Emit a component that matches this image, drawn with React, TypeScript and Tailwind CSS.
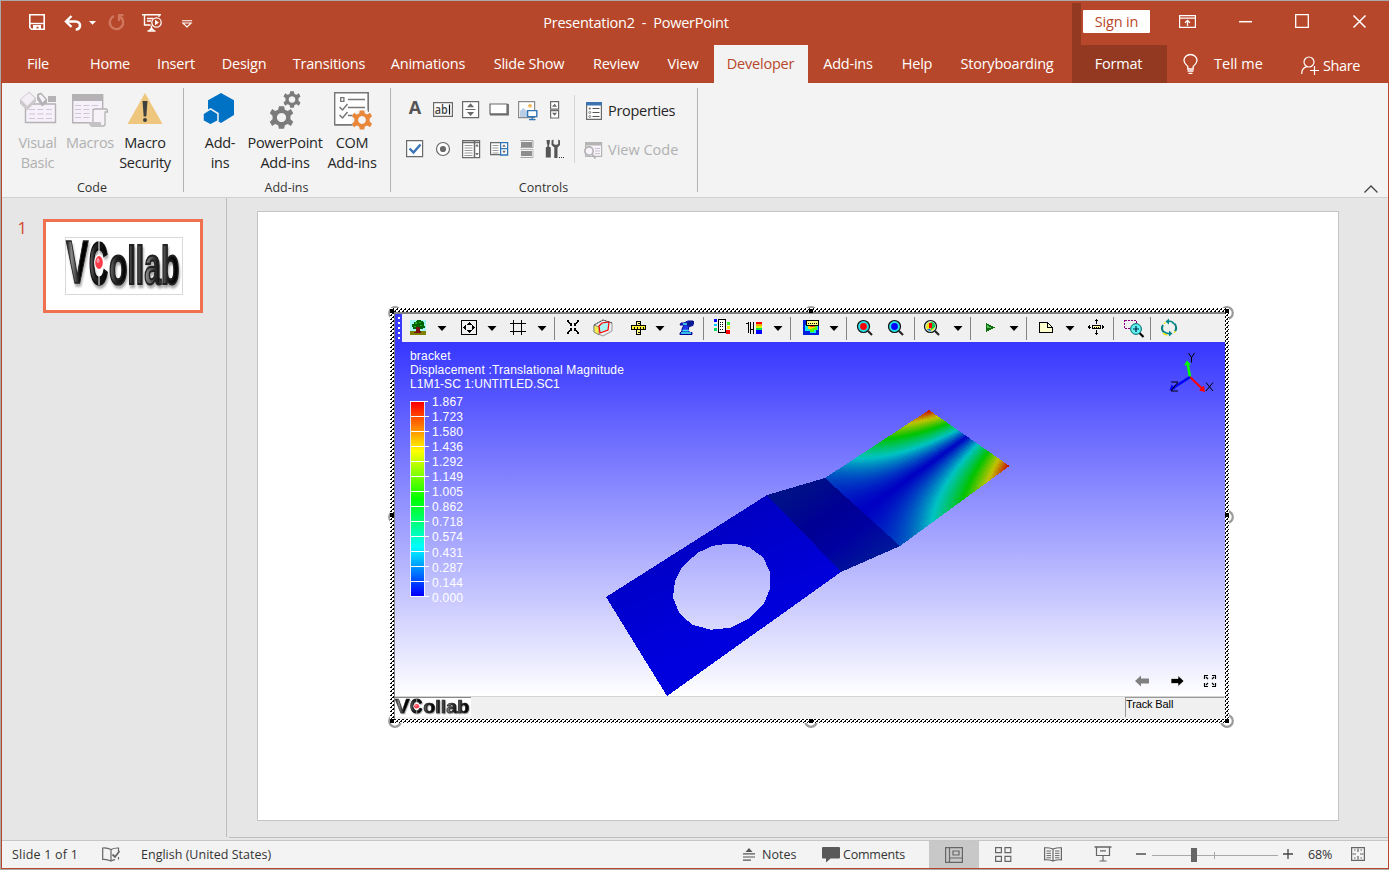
import React from "react";

type P = { children?: React.ReactNode; className?: string };

const Svg = ({ w, h, children, className = "" }: P & { w: number; h: number }) => (
  <svg width={w} height={h} viewBox={`0 0 ${w} ${h}`} fill="none" className={`block shrink-0 overflow-visible ${className}`}>
    {children}
  </svg>
);

/* ---------- Title bar ---------- */

const TitleBar = () => (
  <div className="flex h-[44px] shrink-0 items-start bg-[#b7472a] text-white">
    <Svg w={16} h={16} className="mt-[13px] ml-[28px]">
      <path d="M.8.8h14.4v14.4H2.500L.8 13.500z" stroke="#fff" strokeWidth="1.600" />
      <path d="M1 8.800h14v1.400H1z" fill="#fff" />
      <path d="M4 15.500V11h8v4.500H9.500V12.800H7.500V15.500z" fill="#fff" />
    </Svg>
    <Svg w={18} h={16} className="mt-[14px] ml-[19px]">
      <path d="M2 6.500h9.500c6 0 6 8 .2 8" stroke="#fff" strokeWidth="2.600" />
      <path d="M7.500 1L2 6.500l5.500 5.500" stroke="#fff" strokeWidth="2.400" />
    </Svg>
    <Svg w={7} h={4} className="mt-[20px] ml-[7px]"><path d="M0 0h7L3.500 3.800z" fill="#fff" /></Svg>
    <Svg w={17} h={17} className="mt-[13px] ml-[12px]">
      <path d="M6 2.200A6.700 6.700 0 1 0 11.800 2.600" stroke="#d0765f" strokeWidth="2.400" />
      <path d="M10 1.200h5.500M11 0v7" stroke="#d0765f" strokeWidth="2.200" />
    </Svg>
    <Svg w={20} h={18} className="mt-[13px] ml-[17px]">
      <path d="M0 .8h19M2.500 1v10h6M5 4.500h6M5 7h4M9.500 11.500v3M5.500 17h8M7 17l2.500-3 2.500 3" stroke="#fff" strokeWidth="1.400" />
      <circle cx="14.500" cy="8.500" r="4.700" stroke="#fff" strokeWidth="1.200" />
      <path d="M13 5.800v5.400l4-2.700z" fill="#fff" />
      <path d="M17 1v2" stroke="#fff" strokeWidth="1.300" />
    </Svg>
    <Svg w={10} h={8} className="mt-[19px] ml-[20px]"><path d="M0 .7h10M.8 3l4.200 4 4.200-4z" stroke="#fff" strokeWidth="1.100" /></Svg>
    <div className="mt-[12px] ml-[304px] w-[280px] whitespace-pre text-center text-[14.5px] leading-[20px] tracking-[-0.25px]">Presentation2  -  PowerPoint</div>
    <div className="ml-[296px] h-[42px] w-[9px] mt-[2px] bg-[#933922]" />
    <div className="mt-[9px] ml-[2px] h-[23px] w-[67px] rounded-[1px] bg-white text-center text-[14.5px] leading-[24px] tracking-[-0.15px] text-[#b7472a]">Sign in</div>
    <Svg w={17} h={13} className="mt-[14px] ml-[29px]">
      <path d="M.6.6h15.800v11.800H.6zM.6 3.200h15.800" stroke="#fff" strokeWidth="1.200" />
      <path d="M8.500 11V5.500M6 7.800l2.500-2.500L11 7.800" stroke="#fff" strokeWidth="1.300" />
    </Svg>
    <Svg w={13} h={14} className="mt-[13px] ml-[43px]"><path d="M0 7.700h13" stroke="#fff" strokeWidth="1.500" /></Svg>
    <Svg w={14} h={14} className="mt-[13px] ml-[43px]"><path d="M.7.7h12.600v12.600H.7z" stroke="#fff" strokeWidth="1.300" /></Svg>
    <Svg w={13} h={13} className="mt-[14px] ml-[44px]"><path d="M.5.5l12 12M12.500.5l-12 12" stroke="#fff" strokeWidth="1.500" /></Svg>
  </div>
);

const tabs: [string, string][] = [
  ["File", "w-[73px] pl-[1px]"], ["Home", "w-[72px]"], ["Insert", "w-[60px]"], ["Design", "w-[76px]"],
  ["Transitions", "w-[94px]"], ["Animations", "w-[104px]"], ["Slide Show", "w-[98px]"], ["Review", "w-[76px]"],
  ["View", "w-[60px] pr-[2px]"], ["Developer", "w-[94px] bg-[#f3f3f3] pr-[1px] text-[#b7472a]"], ["Add-ins", "w-[80px]"],
  ["Help", "w-[58px]"], ["Storyboarding", "w-[126px] pr-[4px]"], ["Format", "w-[95px] bg-[#933922] pr-[2px]"],
];

const Tabs = () => (
  <div className="flex h-[38px] shrink-0 bg-[#b7472a] text-[14.5px] leading-[37px] tracking-[-0.22px] text-white">
    {tabs.map(([t, c]) => (
      <div key={t} className={`shrink-0 whitespace-nowrap text-center ${c}`}>{t}</div>
    ))}
    <Svg w={15} h={20} className="mt-[9px] ml-[16px]">
      <path d="M4.800 15v-2.500C3 10.500 1 9 1 6.500a6.300 5.800 0 0 1 13 0c0 2.500-2 4-3.800 6V15z" stroke="#fff" strokeWidth="1.300" />
      <path d="M4.500 17h6M5.500 19.300h4" stroke="#fff" strokeWidth="1.300" />
    </Svg>
    <div className="ml-[16px] w-[51px] whitespace-nowrap tracking-[0px]">Tell me</div>
    <Svg w={18} h={19} className="mt-[11px] ml-[36px]">
      <circle cx="8" cy="6" r="5" stroke="#fff" strokeWidth="1.200" />
      <path d="M.7 18c0-4 2-6.500 5-7.300M13.500 10v9M9 14.500h9" stroke="#fff" strokeWidth="1.200" />
    </Svg>
    <div className="mt-[2px] ml-[4px] tracking-[-0.4px]">Share</div>
  </div>
);

/* ---------- Ribbon ---------- */

const VisualBasicIcon = () => (
  <Svg w={38} h={36}>
    <path d="M6.500 13h30v18.500h-30z" fill="#f6f0fa" stroke="#b4b2b4" strokeWidth="1.400" />
    <path d="M29 5h8v6h-8z" fill="#b4b2b4" />
    <path d="M10 18.500h24M10 23h24M10 27.500h24" stroke="#cfc6d4" strokeDasharray="6 2.500" />
    <path d="M1 8.500L10 .5l7 6.500v3.500L8 19.500l-7-7z" fill="#cbc9cb" />
    <path d="M2 8.500l8-7 6 6-8 7.500z" fill="#f3eef5" />
    <path d="M18 3l4-1.500L28 8v4l-5 3.500-5-7z" fill="#b4b2b4" />
    <path d="M19.500 4.500l2.500-1 4.500 5-3 3z" fill="#f6f0fa" />
  </Svg>
);
const MacrosIcon = () => (
  <Svg w={38} h={36}>
    <path d="M1.700 3.700h30v28h-30z" fill="#f6f0fa" stroke="#b4b2b4" strokeWidth="1.400" />
    <path d="M1 3h31v7H1z" fill="#b4b2b4" />
    <path d="M4 14.500h24M4 18.500h24M4 22.500h17M4 26.500h17" stroke="#cfc6d4" strokeDasharray="6 2.500" />
    <path d="M22 32V20q0-2 2-2h11q1.500 0 1.500 3H34v12q0 2-2 2H21z" fill="#f6f2f8" stroke="#b4b2b4" strokeWidth="1.300" />
    <path d="M18 31h12v4.500H20q-2-.5-2-4.500z" fill="#c4c2c4" />
  </Svg>
);
const WarningIcon = () => (
  <Svg w={36} h={36}>
    <path d="M18 2l17.500 31H.5z" fill="#eec67d" />
    <path d="M15.500 10h5l-1.200 15.500h-2.600z" fill="#404040" />
    <circle cx="18" cy="29" r="2" fill="#404040" />
  </Svg>
);
const HexIcon = () => (
  <Svg w={32} h={36} className="-ml-[2px]">
    <path d="M5 9.200L18 2l13 7.200V24l-13 8L5 24z" fill="#0072c6" />
    <path d="M0 22.500l7.500-4.700 7.500 4.700v7.300L7.500 34 0 29.800z" fill="#0072c6" stroke="#f3f3f3" strokeWidth="1.500" />
  </Svg>
);
const Gear = ({ x, y, s, c }: { x: number; y: number; s: number; c: string }) => (
  <g transform={`translate(${x} ${y}) scale(${s})`}>
    <path
      d="M-2.500-11h5l.8 3.400 2.900 1.300L9.200-8.400l2.300 4.200L8.800-1.700v3.400l2.700 2.500-2.300 4.200-3-2.100-2.900 1.300L2.500 11h-5l-.8-3.400-2.900-1.300-3 2.100-2.300-4.200L-8.800 1.700v-3.400l-2.700-2.500 2.300-4.200 3 2.100 2.900-1.300zM0-4.500a4.500 4.500 0 1 0 .01 0z"
      fill={c}
      fillRule="evenodd"
    />
  </g>
);
const GearsIcon = () => (
  <Svg w={32} h={38}>
    <Gear x={12.500} y={26.500} s={1.020} c="#7b7b7b" />
    <Gear x={23} y={8.500} s={0.740} c="#7b7b7b" />
  </Svg>
);
const ComIcon = () => (
  <Svg w={38} h={38}>
    <path d="M1.700 1.700h33.600v32H1.700z" fill="#fff" stroke="#777" strokeWidth="1.400" />
    <path d="M7.700 6.700h3.200v3.600H7.700zM15 8.500h17M15 16.500h17M15 24.500h8" stroke="#777" strokeWidth="1.300" />
    <path d="M6.500 16l3 3 5-6M6.500 24l3 3 5-6" stroke="#777" strokeWidth="1.500" />
    <circle cx="29" cy="29" r="10.500" fill="#f3f3f3" />
    <path d="M1.700 33.700h17M35.300 1.700v17" stroke="#777" strokeWidth="1.400" />
    <Gear x={29} y={29} s={0.870} c="#e8873a" />
  </Svg>
);

const Big = ({ icon, a, b, dim, className = "" }: { icon: React.ReactNode; a: string; b?: string; dim?: boolean; className?: string }) => (
  <div className={`flex shrink-0 flex-col items-center whitespace-nowrap text-center text-[14.500px] leading-[20px] tracking-[-0.28px] ${dim ? "text-[#b1b1b1]" : "text-[#262626]"} ${className}`}>
    <div className="flex h-[42px] items-start">{icon}</div>
    <div>{a}</div>
    <div>{b}</div>
  </div>
);
const Group = ({ label, children, className = "" }: P & { label: string }) => (
  <div className={`flex shrink-0 flex-col ${className}`}>
    <div className="flex h-[95px] shrink-0 pt-[8px]">{children}</div>
    <div className="pr-[1px] text-center text-[12.500px] leading-[20px] tracking-[0px] text-[#333]">{label}</div>
  </div>
);
const Sep = () => <div className="mt-[5px] h-[104px] w-px shrink-0 bg-[#b4b4b4]" />;

const K = "#6a6a6a";
const smallIcons: React.ReactNode[] = [
  <text x="10" y="14" textAnchor="middle" fontFamily="Open Sans" fontWeight="700" fontSize="18" fill="#555">A</text>,
  <g><path d="M.6 2.600h18.800v13.800H.6z" fill="#fff" stroke={K} strokeWidth="1.200" /><text x="1.800" y="13.500" fontFamily="Open Sans" fontSize="12" fontWeight="600" fill="#444" textLength="13" lengthAdjust="spacingAndGlyphs">ab</text><path d="M16.500 4.500v10" stroke="#111" strokeWidth="1.200" /></g>,
  <g><path d="M1.600 1.600h16v16h-16z" fill="#fff" stroke={K} strokeWidth="1.200" /><path d="M4.500 9.500h10" stroke={K} /><path d="M9.600 3.200l3.500 4H6zM9.600 16l3.500-4H6z" fill={K} /></g>,
  <g><path d="M1 4h17v10H1z" fill="#fff" stroke={K} strokeWidth="1.200" /><path d="M1 14.500h18V4" stroke={K} strokeWidth="1.800" /></g>,
  <g><path d="M1.600 1.600h16v16h-16z" fill="#fff" stroke="#8a8a8a" strokeWidth="1.200" /><circle cx="13" cy="5.800" r="1.900" fill="#eeb95c" /><path d="M3 11l3.500-3 4 4v5H3z" fill="#b9cde6" /><path d="M10.600 10.600h9.200v6h-9.200z" fill="#fff" stroke="#2e75b6" strokeWidth="1.400" /><path d="M15.200 17v2.500M12 19.600h6.500" stroke="#2e75b6" strokeWidth="1.400" /></g>,
  <g><path d="M5.600 1.600h8v7.500h-8zM5.600 10.600h8V18h-8z" fill="#fff" stroke={K} strokeWidth="1.200" /><path d="M9.600 3.800l2.500 3H7zM9.600 15.800l2.500-3H7z" fill={K} /></g>,
  <g><path d="M1.600 1.600h16v16h-16z" fill="#fff" stroke={K} strokeWidth="1.200" /><path d="M4.500 9.500l4 4 7-8" stroke="#3a74b4" strokeWidth="2.400" /></g>,
  <g><circle cx="10" cy="10" r="6.500" fill="#fff" stroke={K} strokeWidth="1.200" /><circle cx="10" cy="10" r="3.100" fill={K} /></g>,
  <g><path d="M1.600 1.600h17v17h-17z" fill="#fff" stroke={K} strokeWidth="1.200" /><path d="M1.600 3.500h17M13.500 2v17" stroke={K} strokeWidth="1.500" /><path d="M3.500 6.500h8M3.500 9h8M3.500 11.500h8M3.500 14h8M3.500 16.500h8" stroke="#999" /><path d="M16 5l1.800 2.500h-3.600zM16 16.500l1.800-2.500h-3.600z" fill={K} /></g>,
  <g><path d="M1.600 3.600h10v12h-10z" fill="#fff" stroke={K} strokeWidth="1.200" /><path d="M3.500 6.500h6M3.500 9h6M3.500 11.500h6M3.500 14h6" stroke="#999" /><path d="M11.600 3.600h7v12.400h-7zM11.600 9.700h7" fill="#fff" stroke="#2e75b6" strokeWidth="1.300" /><path d="M15 5.200l1.800 2.500h-3.600zM15 14.300l1.800-2.500h-3.600z" fill={K} /></g>,
  <g><path d="M3.500 1.500h12.500v7M3.500 8.500H16M3.500 18.500H16" stroke="#a5a5a5" /><path d="M4 3h11v5H4zM4 12h11v5H4z" fill="#8e8e8e" /><path d="M3.500 10.500h12.500v8" stroke="#bbb" /></g>,
  <g><path d="M1.500 1h3.500l-.5 4.500h-2.500zM.8 8.500q2.500-2 5 0v10h-5z" fill="#555" /><path d="M3.200 5v6" stroke="#555" strokeWidth="1.600" /><path d="M6.500 1.500v4.500l2.800 2.500v10.500h3.200V8.500L15 6V1.500l-1.800-1V5l-1.500.8h-1.500L8.500 5V.5z" fill="#555" /><path d="M14 18h1v1h-1zM16 18h1v1h-1zM18 18h1v1h-1z" fill="#333" /></g>,
];

const PropIcon = ({ dim }: { dim?: boolean }) =>
  dim ? (
    <Svg w={18} h={18} className="-ml-px">
      <path d="M1.600 1.600h16v13.800h-16z" fill="#f8f3fa" stroke="#b4b4b4" strokeWidth="1.200" />
      <path d="M1 1h17v3.500H1z" fill="#b4b4b4" /><path d="M11 7.500h5M11 10h5M11 12.500h5" stroke="#c8c0cc" />
      <circle cx="5" cy="10" r="4.200" fill="#f8f3fa" stroke="#b4b4b4" strokeWidth="1.700" /><path d="M8 13l3.500 4.500" stroke="#b4b4b4" strokeWidth="2" />
    </Svg>
  ) : (
    <Svg w={18} h={18}>
      <path d="M1.600 1.600h14.800v15.800H1.600z" fill="#fff" stroke={K} strokeWidth="1.200" />
      <path d="M1 0h16v3.500H1z" fill="#3c74b2" /><path d="M7.500 6.500h7M7.500 10.500h7M7.500 14.500h7" stroke="#555" />
      <circle cx="4.800" cy="6.500" r="1.100" fill={K} /><circle cx="4.800" cy="10.500" r="1" stroke={K} strokeWidth=".8" /><circle cx="4.800" cy="14.500" r="1" stroke={K} strokeWidth=".8" />
    </Svg>
  );

const Ribbon = () => (
  <div className="flex h-[115px] shrink-0 border-b border-[#d0d0d0] bg-[#f3f3f3]">
    <Group label="Code" className="w-[181px]">
      <Big className="ml-[9px] w-[53px]" dim icon={<VisualBasicIcon />} a="Visual" b="Basic" />
      <Big className="w-[52px]" dim icon={<MacrosIcon />} a="Macros" />
      <Big className="w-[58px]" icon={<WarningIcon />} a="Macro" b="Security" />
    </Group>
    <Sep />
    <Group label="Add-ins" className="w-[206px]">
      <Big className="ml-[11px] w-[50px]" icon={<HexIcon />} a="Add-" b="ins" />
      <Big className="w-[80px]" icon={<GearsIcon />} a="PowerPoint" b="Add-ins" />
      <Big className="w-[54px]" icon={<ComIcon />} a="COM" b="Add-ins" />
    </Group>
    <Sep />
    <Group label="Controls" className="w-[306px]">
      <div className="ml-[14px] grid h-[78px] grid-cols-[repeat(6,28px)] grid-rows-[39px_39px] pt-[9px]">
        {smallIcons.map((ic, i) => <Svg key={i} w={20} h={20}>{ic}</Svg>)}
      </div>
      <div className="mt-[4px] ml-px h-[68px] w-px bg-[#d4d4d4]" />
      <div className="ml-[10px] flex flex-col gap-[19px] pt-[10px] text-[14.500px] leading-[20px] tracking-[-0.300px] text-[#262626]">
        <div className="flex items-center gap-[5px]"><PropIcon />Properties</div>
        <div className="flex items-center gap-[6px] tracking-[0px] text-[#b1b1b1]"><PropIcon dim />View Code</div>
      </div>
    </Group>
    <Sep />
    <Svg w={14} h={8} className="mt-[102px] ml-[666px]"><path d="M.5 7.500l6.500-6.500 6.500 6.500" stroke="#444" strokeWidth="1.300" /></Svg>
  </div>
);

/* ---------- VCollab logo ---------- */

const Logo = ({ w, h, id }: { w: number; h: number; id: string }) => (
  <svg width={w} height={h} viewBox="0 0 116 56" preserveAspectRatio="none" className="block shrink-0 overflow-visible">
    <defs>
      <linearGradient id={`${id}v`} x1="0" x2="1">
        <stop offset="0" stopColor="#111" /><stop offset=".25" stopColor="#8a8a8a" /><stop offset=".5" stopColor="#333" /><stop offset=".65" stopColor="#000" />
      </linearGradient>
      <linearGradient id={`${id}c`} x1="0" x2="1">
        <stop offset="0" stopColor="#777" /><stop offset=".3" stopColor="#222" /><stop offset="1" stopColor="#000" />
      </linearGradient>
      <linearGradient id={id} x1="0" x2="1">
        <stop offset="0" stopColor="#777" /><stop offset=".1" stopColor="#222" /><stop offset=".24" stopColor="#000" />
        <stop offset=".27" stopColor="#888" /><stop offset=".34" stopColor="#111" /><stop offset=".38" stopColor="#888" />
        <stop offset=".46" stopColor="#222" /><stop offset=".5" stopColor="#999" /><stop offset=".7" stopColor="#111" />
        <stop offset=".75" stopColor="#777" /><stop offset=".84" stopColor="#111" /><stop offset="1" stopColor="#000" />
      </linearGradient>
    </defs>
    <rect width="116" height="56" fill="#fff" />
    <g style={{ filter: "drop-shadow(1.5px 3px 1px #aaa)" }} fontFamily="Liberation Sans" fontWeight="700">
      <text x="0" y="45" fontSize="62" textLength="22.500" lengthAdjust="spacingAndGlyphs" fill={`url(#${id}v)`} stroke="#222" strokeWidth="1.500">V</text>
      <text x="23" y="45.500" fontSize="60" textLength="19" lengthAdjust="spacingAndGlyphs" fill={`url(#${id}c)`} stroke="#111" strokeWidth="2.400">C</text>
      <text x="43" y="45.500" fontSize="54" textLength="70.500" lengthAdjust="spacingAndGlyphs" fill={`url(#${id})`} stroke="#222" strokeWidth="2.200">ollab</text>
    </g>
    <path d="M33 2v45" stroke="#fff" strokeWidth="1" />
    <ellipse cx="33" cy="24.500" rx="4.800" ry="8" fill="#fff" />
    <ellipse cx="33" cy="24.500" rx="3.800" ry="6.500" fill="#ff3b4a" />
    <ellipse cx="32" cy="22.500" rx="1.500" ry="2.500" fill="#ff9aa4" />
  </svg>
);

/* ---------- Viewer toolbar ---------- */

const Tool = ({ ml, children }: P & { ml: string }) => (
  <svg width={20} height={20} viewBox="0 0 20 20" shapeRendering="crispEdges" fill="none" className={`block shrink-0 overflow-visible ${ml}`}>{children}</svg>
);
const Drop = ({ ml }: { ml: string }) => (
  <svg width={10} height={6} viewBox="0 0 10 6" className={`mt-[1px] block shrink-0 ${ml}`}><path d="M.5 0h9L5 5z" fill="#000" /></svg>
);
const Bar = ({ ml }: { ml: string }) => <div className={`mt-px h-[23px] w-px shrink-0 bg-[#848484] ${ml}`} />;

const Magnifier = ({ ring, core }: { ring: string; core: React.ReactNode }) => (
  <g shapeRendering="auto">
    <path d="M13 13l4 4" stroke="#222" strokeWidth="2.200" />
    <circle cx="8.500" cy="8.500" r="6" fill={ring} stroke="#111" strokeWidth="1.200" />
    {core}
  </g>
);

const ViewerToolbar = () => (
  <div className="flex h-[28px] shrink-0 items-center bg-[#f0f0f0]">
    <div className="flex h-full w-[7px] shrink-0 flex-col items-center justify-center gap-[3px] bg-[#3a3aff]">
      {[0, 1, 2, 3, 4].map((i) => <div key={i} className="size-[2px] bg-white" />)}
    </div>
    <Tool ml="ml-[6px]">
      <path d="M2 2h16v15H2z" fill="#a6f6f6" />
      <path d="M2 13h16v4H2z" fill="#808000" />
      <path d="M6 4h2V3h1V2h4v1h2v1h1v4h1v2h-2v1H5V9H4V6h2z" fill="#006400" />
      <path d="M7 4h2v2H7zM11 4h2v1h-2zM12 7h2v1h-2zM6 8h2v1H6z" fill="#1fae1f" />
      <path d="M8 9h4v4h1v2H6v-1h2z" fill="#7a1010" />
    </Tool>
    <Drop ml="ml-[9px]" />
    <Tool ml="ml-[12px]">
      <path d="M2.500 2.500h15v14h-15z" stroke="#000" /><path d="M10 4l3 3H7zM10 15l3-3H7zM4 9.500l3-3v6zM16 9.500l-3-3v6z" fill="#000" />
    </Tool>
    <Drop ml="ml-[8px]" />
    <Tool ml="ml-[11px]"><path d="M5.500 2v15M13.500 2v15M2 5.500h16M2 13.500h16" stroke="#000" /></Tool>
    <Drop ml="ml-[9px]" />
    <Bar ml="ml-[7px]" />
    <Tool ml="ml-[8px]">
      <path d="M5 3.500l4 4M15 3.500l-4 4M5 14.500l4-4M15 14.500l-4-4" stroke="#000" strokeWidth="1.800" />
      <path d="M4 2h2v2H4zM14 2h2v2h-2zM4 14h2v2H4zM14 14h2v2h-2zM7 5h2v3H7zM11 5h2v3h-2zM7 10h2v3H7zM11 10h2v3h-2z" fill="#000" />
    </Tool>
    <Tool ml="ml-[10px]">
      <g shapeRendering="auto"><path d="M1 7l9-5 9 3v8l-9 5-9-4z" fill="#eee" stroke="#999" /><path d="M1 7l5 2v8l-5-3z" fill="#f2ee50" stroke="#777" strokeWidth=".8" /><path d="M6 8l3-3 7-1-1 8-8 3z" fill="#a9f3f3" stroke="#f00" strokeWidth="1.200" /><path d="M1 7l9-5 9 3" stroke="#444" strokeDasharray="2 1" /></g>
    </Tool>
    <Tool ml="ml-[15px]">
      <path d="M8.500 3.500h4v13h-4z" fill="#fff68a" stroke="#000" /><path d="M3.500 7.500h14v4h-14z" fill="#ffee32" stroke="#000" />
      <path d="M6.500 9v2M9.500 9v2M12.500 9v2M15.500 9v2M10 5.500h2M10 14.500h2" stroke="#000" />
    </Tool>
    <Drop ml="ml-[7px]" />
    <Tool ml="ml-[12px]">
      <g shapeRendering="auto"><path d="M3 16.500h12v-2h-2l-2-2 1-4 4-1V3h-5L7 5H4L3 7h4l-2 4v2l-2 2z" fill="#2038e8" stroke="#000090" /><path d="M8 5.500l5-2.500h4v3l-6 2.500z" fill="#0a1a90" /><path d="M5.500 12.500h6M4 15h10M6 6h4" stroke="#3ce8e8" strokeWidth="1.500" /></g>
    </Tool>
    <Bar ml="ml-[6px]" />
    <Tool ml="ml-[8px]">
      <path d="M6.500 1.500h7v13h-7z" fill="#fff" stroke="#000" /><path d="M8 4.500h4M8 6.500h4M8 8.500h4M8 11.500h4" stroke="#000" strokeDasharray="1 1" />
      <path d="M2 1h3v3H2z" fill="#00f" /><path d="M2 6h3v2H2z" fill="#0cf" /><path d="M2 10h3v3H2z" fill="#0d6" /><path d="M15 4h3v3h-3z" fill="#3e3" /><path d="M15 8h3v3h-3z" fill="#ee0" /><path d="M14 12h4v4h-4z" fill="#f00" />
    </Tool>
    <Tool ml="ml-[12px]">
      <path d="M4.500 4v11M6.500 4v12M9.500 4v12M2 5.500h2M7 11.500h2" stroke="#000" /><path d="M12 4h6v2h-6z" fill="#f00" /><path d="M12 6h6v2h-6z" fill="#fa0" /><path d="M12 8h6v2h-6z" fill="#cf0" /><path d="M12 10h6v2h-6z" fill="#0d5" /><path d="M12 12h6v4h-6z" fill="#00f" />
    </Tool>
    <Drop ml="ml-[9px]" />
    <Bar ml="ml-[7px]" />
    <Tool ml="ml-[10px]">
      <path d="M2 2h16v15H2z" fill="#0020e0" /><path d="M4 7h13v5h-2v3H9v-2H4z" fill="#10e8e8" /><path d="M8 7h8v5h-3v2H9z" fill="#5f0" /><path d="M7 8h7v2h-3v1H7z" fill="#fd0" /><path d="M9 8h5v1H9z" fill="#f42" /><path d="M5.500 2.500h12v5h-12z" fill="#ffff80" stroke="#000" /><path d="M7 5h9" stroke="#000" strokeDasharray="1 1" />
    </Tool>
    <Drop ml="ml-[8px]" />
    <Bar ml="ml-[7px]" />
    <Tool ml="ml-[8px]"><Magnifier ring="#28e0e8" core={<circle cx="8.500" cy="8.500" r="3.400" fill="#f00" />} /></Tool>
    <Tool ml="ml-[11px]"><Magnifier ring="#28e0e8" core={<circle cx="8.500" cy="8.500" r="3.400" fill="#00f" />} /></Tool>
    <Bar ml="ml-[8px]" />
    <Tool ml="ml-[7px]"><Magnifier ring="#c8f4e0" core={<g><circle cx="8.500" cy="8.500" r="4.300" fill="#f5e400" /><path d="M8.500 4q5 0 4.500 5L9 12z" fill="#10c850" /><path d="M7 5h3v5H7z" fill="#f00" /><path d="M5 11.500l4 2-1-3z" fill="#06f" /></g>} /></Tool>
    <Drop ml="ml-[11px]" />
    <Bar ml="ml-[7px]" />
    <Tool ml="ml-[9px]"><path d="M6 5l9 4.500L6 14z" fill="#107010" /><path d="M7 7l5 3H7z" fill="#58c058" /></Tool>
    <Drop ml="ml-[9px]" />
    <Bar ml="ml-[7px]" />
    <Tool ml="ml-[9px]"><path d="M3.500 4.500h8l5 5v5h-13z" fill="#ffffd0" stroke="#000" /><path d="M11.500 4.500v5h5" stroke="#000" /></Tool>
    <Drop ml="ml-[9px]" />
    <Tool ml="ml-[11px]">
      <path d="M10 1h1v1h1v1H9V2h1zM9 15h3v1h-1v1h-1v-1H9zM3 7h1v4H3zM2 8h1v2H2zM17 7h-1v4h1zM18 8h-1v2h1z" fill="#000" /><path d="M10.500 2v14M2 9h16" stroke="#000" /><path d="M5 6h11v6H5z" fill="#f0f0f0" /><path d="M6.500 7.500h8v3h-8z" fill="#ffff9a" stroke="#000" /><path d="M8 9.500h5" stroke="#000" strokeDasharray="1 1" />
    </Tool>
    <Bar ml="ml-[7px]" />
    <Tool ml="ml-[10px]">
      <path d="M.5 2.500h12v8H.5z" stroke="#808" strokeDasharray="2 1" /><g shapeRendering="auto"><path d="M15.500 15l4 4" stroke="#000" strokeWidth="2.200" /><circle cx="12" cy="11" r="5.400" fill="#5ff0f0" stroke="#066" /><path d="M12 8v6M9 11h6" stroke="#024" strokeWidth="1.200" /></g>
    </Tool>
    <Bar ml="ml-[6px]" />
    <Tool ml="ml-[8px]">
      <g shapeRendering="auto"><path d="M5 14.500q-3.500-3.500-1-7.500M15.500 5.500q3 4 .5 8" stroke="#0a8080" strokeWidth="2" /><path d="M9 3.500q4-1 6 2.500M11 15.500q-4 .5-6-2" stroke="#088" strokeWidth="1.600" /><path d="M10 0.500v6L6.500 3.500zM10 12.500v6l3.500-3z" fill="#088" /><path d="M4 15q2 2 4.500 2M16.500 13l-1.500 2M5 6l1.500-2" stroke="#e8e800" strokeWidth="1.200" /></g>
    </Tool>
  </div>
);

/* ---------- Simulation model ---------- */

const hue = (t: number, k: number) => {
  const h = (1 - Math.min(1, Math.max(0, t))) * 4;
  const c = h < 1 ? [1, h, 0] : h < 2 ? [2 - h, 1, 0] : h < 3 ? [0, 1, h - 2] : [0, 4 - h, 1];
  return `rgb(${c.map((v) => Math.round(v * k)).join(",")})`;
};

const NU = 64;
const NV = 48;
const at = (u: number, v: number) => {
  const x = (825 + 104 * u) * (1 - v) + (900 + 109.500 * u) * v;
  const y = (478 - 68 * u) * (1 - v) + (546 - 80 * u) * v;
  return `${(x - 395).toFixed(2)},${(y - 342).toFixed(2)}`;
};
const cells: { p: string; c: string }[] = [];
for (let i = 0; i < NU; i++) {
  for (let j = 0; j < NV; j++) {
    const u = (i + 0.5) / NU;
    const v = (j + 0.5) / NV;
    const z = 0.5 - 0.025 * u;
    const s = v < z ? (z - v) / z : (v - z) / (1 - z);
    const t = (0.1 + 0.9 * Math.pow(u, 1.45)) * Math.pow(s, 1.4 - 0.4 * u);
    const u2 = Math.min(1, (i + 1.3) / NU);
    const v2 = Math.min(1, (j + 1.3) / NV);
    cells.push({ p: [at(i / NU, j / NV), at(u2, j / NV), at(u2, v2), at(i / NU, v2)].join(" "), c: hue(t, 195) });
  }
}

const labels = ["1.867", "1.723", "1.580", "1.436", "1.292", "1.149", "1.005", "0.862", "0.718", "0.574", "0.431", "0.287", "0.144", "0.000"];

const Scene = () => (
  <svg width={830} height={354} viewBox="0 0 830 354" fill="none" className="block">
    <defs>
      <linearGradient id="plate" x1="300" y1="190" x2="340" y2="290" gradientUnits="userSpaceOnUse">
        <stop stopColor="#0000c4" /><stop offset="1" stopColor="#0000de" />
      </linearGradient>
      <linearGradient id="bend" x1="415" y1="140" x2="475" y2="225" gradientUnits="userSpaceOnUse">
        <stop stopColor="#001088" /><stop offset=".35" stopColor="#000094" /><stop offset=".65" stopColor="#0000a0" /><stop offset="1" stopColor="#001a98" />
      </linearGradient>
    </defs>
    <g shapeRendering="crispEdges">
      <path
        fillRule="evenodd"
        fill="url(#plate)"
        d="M372 153L446 230L272 354L211 255zM331.700 201.700L340.700 202L354.300 205.300L368 215.300L375 229.700V247L368.300 262.700L353.700 276.700L335.700 285.700L315.700 287.700L297 282.700L284 270.700L278 255.300L280 238.700L287.300 225L302.300 211L317 204z"
      />
      <path d="M372 153L430 136L505 204L446 230z" fill="url(#bend)" />
      {cells.map((c, i) => <polygon key={i} points={c.p} fill={c.c} />)}
    </g>
    <g fill="#fff" fontFamily="Liberation Sans" fontSize="12">
      {labels.map((l, i) => <text key={l} x="37" y={63.600 + i * 15.090} textLength="31" lengthAdjust="spacing">{l}</text>)}
    </g>
    <g shapeRendering="crispEdges">
      {Array.from({ length: 97 }, (_, i) => <rect key={i} x="16" y={60 + i * 2} width="13" height="2" fill={hue(1 - i / 96, 255)} />)}
      <path d="M15.500 59v196M29.500 59v196" stroke="#fff" strokeWidth="1" opacity=".8" />
      {labels.map((l, i) => <rect key={l} x={i ? 16 : 15} y={Math.round(59 + i * 15.030)} width="18" height="1" fill="#fff" />)}
    </g>
    <g strokeWidth="2.600">
      <path d="M795 35l-2.500-14" stroke="#0f0" /><path d="M789 23.500l3-5 4 4z" fill="#0f0" />
      <path d="M795 35l13 12.500" stroke="#f00" strokeWidth="2" /><path d="M810 50l-6-1.500 5-5z" fill="#f00" />
      <path d="M795 35l-17 11" stroke="#00f" /><path d="M774.500 48.500l2-6 4 4.500z" fill="#00f" />
    </g>
    <path d="M793.500 11l3 4.500 3-4.500M796.500 15.500v5M776 40h7l-7 9h7M811 40.500l7 8.500M818 40.500l-7 8.500" stroke="#000" strokeWidth="1" />
    <path d="M740 339l6-5.500v3h8v5h-8v3z" fill="#808080" />
    <path d="M789 339l-6-5.500v3h-7v5h7v3z" fill="#000" stroke="#fff" strokeWidth=".7" />
    <path d="M809.500 334v3M809 333.500h4M811 335l2 2M820.500 334v3M821 333.500h-4M819 335l-2 2M809.500 344v-3M809 344.500h4M811 343l2-2M820.500 344v-3M821 344.500h-4M819 343l-2-2" stroke="#000" strokeWidth="1.200" />
  </svg>
);

const handles: [number, number][] = [[5, 5], [421, 5], [837, 5], [5, 209], [837, 209], [5, 413], [421, 413], [837, 413]];

const Handles = () => (
  <svg width={840} height={416} viewBox="0 0 840 416" fill="none" className="absolute top-0 left-0 block overflow-visible">
    {handles.map(([x, y], i) => <circle key={i} cx={x} cy={y} r="5.800" fill="#fff" stroke="#9a9a9a" strokeWidth="2.200" />)}
  </svg>
);

const HatchFrame = () => (
  <svg width={840} height={416} viewBox="0 0 840 416" fill="none" className="absolute top-0 left-0 block overflow-visible">
    <defs>
      <pattern id="hatch" width="4" height="4" patternUnits="userSpaceOnUse">
        <rect width="4" height="4" fill="#fff" />
        <path d="M0 3h2v1H0zM1 2h1v1H1zM2 1h2v1H2zM3 0h1v1H3z" fill="#000" shapeRendering="crispEdges" />
      </pattern>
    </defs>
    <path d="M0 0h839v415H0zM4 4v407h831V4z" fill="url(#hatch)" fillRule="evenodd" />
    {handles.map(([x, y], i) => <rect key={i} x={x - (x > 100 ? 2 : 5)} y={y - (y > 400 ? 2 : 4)} width="4" height="4" fill="#000" />)}
  </svg>
);

const Viewer = () => (
  <div className="relative mt-[96px] ml-[132px] h-[416px] w-[840px] pt-[4px] pl-[4px] font-['Liberation_Sans',sans-serif]">
    <Handles />
    <div className="relative flex h-[408px] w-[832px] flex-col border-t-2 border-l border-[#808080] bg-[#f0f0f0]">
      <div className="flex w-[830px] shrink-0 flex-col">
        <ViewerToolbar />
        <div className="relative h-[354px] w-[830px] shrink-0 bg-[linear-gradient(#3636ff,#ffffff)]">
          <Scene />
          <div className="absolute top-[7px] left-[15px] whitespace-nowrap text-[12px] leading-[14px] tracking-[0.19px] text-white">
            <div>bracket</div>
            <div>Displacement :Translational Magnitude</div>
            <div className="tracking-[0.02px]">L1M1-SC 1:UNTITLED.SC1</div>
          </div>
        </div>
        <div className="flex h-[22px] shrink-0 border-t border-[#d4d4d4] text-black">
          <div className="h-[18px] w-[76px] shrink-0 border-t border-[#888] bg-white"><Logo w={76} h={19} id="lg2" /></div>
          <div className="ml-[654px] h-[20px] w-[99px] shrink-0 border-t border-l border-[#999] text-[11px] leading-[13px] tracking-[-0.13px]">Track Ball</div>
        </div>
      </div>
    </div>
    <HatchFrame />
  </div>
);

/* ---------- Status bar ---------- */

const S = "#666";
const StatusBar = () => (
  <div className="flex h-[28px] shrink-0 items-center border-t border-[#c6c6c6] bg-[#f3f3f3] pt-px text-[12.500px] tracking-[-0.06px] whitespace-nowrap text-[#333]">
    <div className="ml-[10px] w-[90px] tracking-[0.2px]">Slide 1 of 1</div>
    <Svg w={18} h={15} className="-mt-[2px]"><path d="M9 2.500Q5 .5.7 1v11.500q4-.5 8.300 1.500 2-1 4-1.300M9 2.500v11.500M9 2.500Q12 .8 16.500 1v3M16.500 12.500V10" stroke={S} strokeWidth="1.200" /><path d="M10.500 7.500l2.500 2.500 4.500-6" stroke={S} strokeWidth="1.800" /></Svg>
    <div className="ml-[21px] w-[140px] tracking-[0.01px]">English (United States)</div>
    <Svg w={14} h={14} className="-mt-px ml-[461px]"><path d="M7 0l3.500 4h-7z" fill="#555" /><path d="M1 5.800h12M1 9h12M1 12.200h8" stroke="#555" strokeWidth="1.200" /></Svg>
    <div className="ml-[6px] w-[60px] tracking-[0.05px]">Notes</div>
    <Svg w={18} h={16} className="-mt-px"><path d="M1 0h16q1 0 1 1v9.500q0 1-1 1H8.500L4 15.500v-4H1q-1 0-1-1V1q0-1 1-1z" fill="#595959" /></Svg>
    <div className="ml-[3px] w-[86px] tracking-[-0.2px]">Comments</div>
    <div className="-mt-px flex h-[27px] w-[50px] items-center justify-center bg-[#c8c8c8]">
      <Svg w={18} h={16} className="-ml-[1px]"><path d="M.6.6h16.800v14.800H.6zM4.500.6v14.800M4.500 11h13M8 4h6v4H8z" stroke={S} strokeWidth="1.200" /></Svg>
    </div>
    <Svg w={17} h={15} className="-mt-[2px] ml-[16px]"><path d="M.6.6h5.800v5H.6zM10 .6h5.800v5H10zM.6 9.400h5.800v5H.6zM10 9.400h5.800v5H10z" stroke={S} strokeWidth="1.200" /></Svg>
    <Svg w={18} h={15} className="-mt-[2px] ml-[32px]"><path d="M9 2Q5 .5.6.8v12Q5 12.500 9 14q4-1.500 8.400-1.200V.8Q13 .5 9 2zM9 2v12" stroke={S} strokeWidth="1.200" /><path d="M2.500 4h4.500M2.500 6.300h4.500M2.500 8.600h4.500M2.500 10.800h4.500M11 4h4.500M11 6.300h4.500M11 8.600h4.500M11 10.800h4.500" stroke={S} /></Svg>
    <Svg w={18} h={16} className="-mt-[2px] ml-[32px]"><path d="M.5 1h17" stroke={S} strokeWidth="1.500" /><path d="M2.500 1v8.500h13V1M9 9.500v5M5.500 15h7M6 4.800h6" stroke={S} strokeWidth="1.200" /></Svg>
    <Svg w={10} h={2} className="-mt-[2px] ml-[24px]"><path d="M0 1h10" stroke="#444" strokeWidth="1.400" /></Svg>
    <Svg w={126} h={16} className="-mt-px ml-[6px]"><path d="M0 8.500h126M62.500 5v7" stroke="#a8a8a8" /><path d="M39 1h6v14h-6z" fill={S} /></Svg>
    <Svg w={10} h={10} className="-mt-[2px] ml-[5px]"><path d="M0 5h10M5 0v10" stroke="#444" strokeWidth="1.300" /></Svg>
    <div className="ml-[15px] w-[43px] tracking-[-0.2px]">68%</div>
    <Svg w={14} h={14} className="-mt-[2px]"><path d="M.6.6h12.800v12.800H.6z" stroke={S} strokeWidth="1.200" /><path d="M7 1.500v3.500M7 9v3.500M1.500 7H5M9 7h3.500M3 3h1.500M9.500 3H11M3 11h1.500M9.500 11H11" stroke={S} strokeWidth="1.200" /></Svg>
  </div>
);

export default function App() {
  return (
    <div className="h-[870px] w-[1389px] overflow-hidden bg-[#a9a9a9] pt-px pb-px pl-px font-['Open_Sans','Noto_Sans',sans-serif]">
      <div className="flex h-[868px] w-[1388px] flex-col bg-[#b7472a]">
        <TitleBar />
        <Tabs />
        <div className="flex min-h-0 flex-1 flex-col border-r border-b border-l border-[#b7472a] bg-[#e6e6e6]">
          <Ribbon />
          <div className="flex h-[642px] shrink-0">
            <div className="flex h-[639px] w-[225px] shrink-0 border-r border-[#bdbdbd]">
              <div className="mt-[19px] w-[41px] pl-[15.5px] text-[16.500px] leading-[22px] text-[#d24726]">1</div>
              <div className="mt-[21px] flex h-[94px] w-[160px] shrink-0 items-center justify-center border-3 border-[#f0714f] bg-white">
                <div className="ml-px border border-[#d8d8d8]"><Logo w={116} h={56} id="lg1" /></div>
              </div>
            </div>
            <div className="ml-[2px] h-[640px] flex-1 border-b border-[#bdbdbd] pt-[13px] pl-[28px]">
              <div className="h-[610px] w-[1082px] border border-[#c4c4c4] bg-white"><Viewer /></div>
            </div>
          </div>
          <StatusBar />
        </div>
      </div>
    </div>
  );
}
